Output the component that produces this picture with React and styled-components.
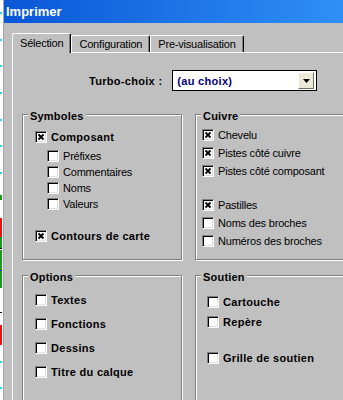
import React from 'react';
import styled, { createGlobalStyle } from 'styled-components';

const GlobalStyle = createGlobalStyle`
  html, body { margin: 0; padding: 0; }
  body {
    width: 343px;
    height: 400px;
    overflow: hidden;
    background: #fff;
    font-family: "Liberation Sans", Arial, sans-serif;
  }
`;

const Screen = styled.div`
  display: flex;
  width: 343px;
  height: 400px;
  overflow: hidden;
`;

const Strip = styled.svg`
  flex: 0 0 3px;
  display: block;
`;

const Dialog = styled.div`
  flex: 1;
  min-width: 0;
  display: flex;
  flex-direction: column;
  background: #c0c0c0;
  border-left: 1px solid #a8a8a8;
  overflow: hidden;
`;

const TitleBar = styled.div`
  height: 23px;
  flex: 0 0 23px;
  padding-left: 2px;
  background: linear-gradient(to right, #0a57d8, #2f8ff6);
  color: #fff;
  font-weight: bold;
  font-size: 13px;
  line-height: 23px;
`;

const Body = styled.div`
  flex: 1;
  display: flex;
  flex-direction: column;
  padding: 10px 0 0 8px;
`;

const TabRow = styled.div`
  display: flex;
  align-items: flex-end;
  height: 20px;
  margin-bottom: -1px;
  position: relative;
  z-index: 1;
`;

const Tab = styled.div`
  box-sizing: border-box;
  height: ${p => (p.$active ? '20px' : '17px')};
  margin-bottom: ${p => (p.$active ? '0' : '1px')};
  padding: 0 7px;
  background: #c0c0c0;
  border-top: 1px solid #fff;
  border-left: 1px solid #fff;
  border-right: 1px solid #000;
  box-shadow: inset -1px 0 0 #808080;
  border-radius: 2px 2px 0 0;
  font-size: 11px;
  letter-spacing: -0.2px;
  line-height: ${p => (p.$active ? '18px' : '16px')};
  color: #000;
  white-space: nowrap;
`;

const Panel = styled.div`
  flex: 1;
  border-top: 1px solid #fff;
  border-left: 1px solid #fff;
  padding-top: 17px;
`;

const TurboRow = styled.div`
  display: flex;
  align-items: center;
  gap: 10px;
  padding-left: 76px;
`;

const BoldText = styled.span`
  font-weight: bold;
  font-size: 11px;
  letter-spacing: 0.3px;
  color: ${p => p.$color || '#000'};
`;

const Select = styled.div`
  box-sizing: border-box;
  width: 145px;
  height: 21px;
  display: flex;
  align-items: center;
  justify-content: space-between;
  padding: 0 2px 0 4px;
  border: 1px solid #000;
  background: #fff;
`;

const DropButton = styled.div`
  box-sizing: border-box;
  width: 16px;
  height: 17px;
  display: flex;
  align-items: center;
  justify-content: center;
  background: #ece9d8;
  border-top: 1px solid #fff;
  border-left: 1px solid #fff;
  border-right: 1px solid #716f64;
  border-bottom: 1px solid #716f64;
`;

const Groups = styled.div`
  display: grid;
  grid-template-columns: 160px 160px;
  grid-template-rows: 146px 140px;
  column-gap: 13px;
  row-gap: 15px;
  margin: 23px 0 0 9px;
`;

const Group = styled.div`
  position: relative;
  box-sizing: border-box;
  border: 1px solid #808080;
  box-shadow: 1px 1px 0 #fff, inset 1px 1px 0 #fff;
  padding: ${p => p.$pad};
  display: flex;
  flex-direction: column;
`;

const Legend = styled.span`
  position: absolute;
  top: -5px;
  left: 5px;
  padding: 0 2px;
  background: #c0c0c0;
  font-weight: bold;
  font-size: 11px;
  letter-spacing: 0.2px;
  line-height: 13px;
`;

const Row = styled.div`
  display: flex;
  align-items: center;
  height: ${p => p.$h}px;
  margin-top: ${p => p.$gap || 0}px;
  padding-left: ${p => p.$indent || 0}px;
`;

const Box = styled.span`
  box-sizing: border-box;
  flex: 0 0 12px;
  width: 12px;
  height: 12px;
  display: flex;
  align-items: center;
  justify-content: center;
  background: #fff;
  border-top: 1px solid #808080;
  border-left: 1px solid #808080;
  border-right: 1px solid #fff;
  border-bottom: 1px solid #fff;
  box-shadow: inset 1px 1px 0 #000, inset -1px -1px 0 #dfdfdf;
`;

const Label = styled.span`
  margin-left: 4px;
  font-size: 11px;
  font-weight: ${p => (p.$bold ? 'bold' : 'normal')};
  letter-spacing: ${p => (p.$bold ? '0.3px' : '-0.2px')};
  color: #000;
  white-space: nowrap;
`;

function Check({ checked, bold, label, h, gap, indent }) {
  return (
    <Row $h={h} $gap={gap} $indent={indent}>
      <Box>
        {checked && (
          <svg width="8" height="8" viewBox="0 0 8 8">
            <path d="M1.5 1.5 L6.5 6.5 M6.5 1.5 L1.5 6.5" stroke="#000" strokeWidth="1.9" />
          </svg>
        )}
      </Box>
      <Label $bold={bold}>{label}</Label>
    </Row>
  );
}

const marks = [
  { y: 12, h: 2, c: '#2ad4e8' }, { y: 39, h: 2, c: '#2ad4e8' }, { y: 65, h: 2, c: '#2ad4e8' },
  { y: 92, h: 2, c: '#2ad4e8' }, { y: 119, h: 2, c: '#2ad4e8' }, { y: 145, h: 2, c: '#2ad4e8' },
  { y: 172, h: 2, c: '#2ad4e8' }, { y: 195, h: 5, c: '#1a9a1a' }, { y: 218, h: 19, c: '#f01010' },
  { y: 237, h: 11, c: '#1a9a1a' }, { y: 248, h: 1, c: '#000' }, { y: 250, h: 20, c: '#1a9a1a' },
  { y: 270, h: 1, c: '#2020c0' }, { y: 271, h: 17, c: '#1a9a1a' }, { y: 312, h: 1, c: '#000' },
  { y: 325, h: 20, c: '#f01010' }, { y: 361, h: 2, c: '#2ad4e8' }, { y: 387, h: 2, c: '#2ad4e8' },
];

export default function App() {
  return (
    <>
      <GlobalStyle />
      <Screen>
        <Strip width="3" height="400" viewBox="0 0 3 400">
          {marks.map((m, i) => (
            <rect key={i} x="0" y={m.y} width="2" height={m.h} fill={m.c} />
          ))}
        </Strip>
        <Dialog>
          <TitleBar>Imprimer</TitleBar>
          <Body>
            <TabRow>
              <Tab $active>Sélection</Tab>
              <Tab>Configuration</Tab>
              <Tab>Pre-visualisation</Tab>
            </TabRow>
            <Panel>
              <TurboRow>
                <BoldText>Turbo-choix :</BoldText>
                <Select>
                  <BoldText $color="#000080">(au choix)</BoldText>
                  <DropButton>
                    <svg width="7" height="4" viewBox="0 0 7 4">
                      <path d="M0 0 H7 L3.5 4 Z" fill="#000" />
                    </svg>
                  </DropButton>
                </Select>
              </TurboRow>
              <Groups>
                <Group $pad="14px 0 0 12px">
                  <Legend>Symboles</Legend>
                  <Check checked bold label="Composant" h={16} />
                  <Check label="Préfixes" h={16} gap={3} indent={12} />
                  <Check label="Commentaires" h={16} indent={12} />
                  <Check label="Noms" h={16} indent={12} />
                  <Check label="Valeurs" h={16} indent={12} />
                  <Check checked bold label="Contours de carte" h={16} gap={16} />
                </Group>
                <Group $pad="11px 0 0 6px">
                  <Legend>Cuivre</Legend>
                  <Check checked label="Chevelu" h={18} />
                  <Check checked label="Pistes côté cuivre" h={18} />
                  <Check checked label="Pistes côté composant" h={18} />
                  <Check checked label="Pastilles" h={18} gap={16} />
                  <Check label="Noms des broches" h={18} />
                  <Check label="Numéros des broches" h={18} />
                </Group>
                <Group $pad="12px 0 0 12px">
                  <Legend>Options</Legend>
                  <Check bold label="Textes" h={24} />
                  <Check bold label="Fonctions" h={24} />
                  <Check bold label="Dessins" h={24} />
                  <Check bold label="Titre du calque" h={24} />
                </Group>
                <Group $pad="16px 0 0 11px">
                  <Legend>Soutien</Legend>
                  <Check bold label="Cartouche" h={20} />
                  <Check bold label="Repère" h={20} />
                  <Check bold label="Grille de soutien" h={20} gap={16} />
                </Group>
              </Groups>
            </Panel>
          </Body>
        </Dialog>
      </Screen>
    </>
  );
}
